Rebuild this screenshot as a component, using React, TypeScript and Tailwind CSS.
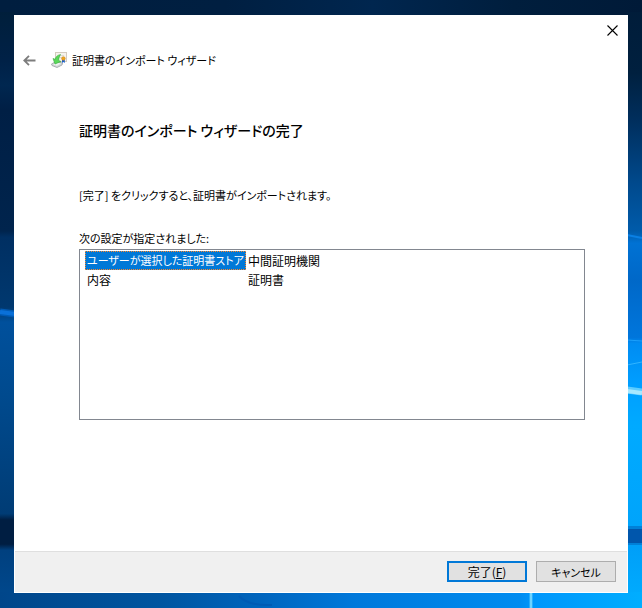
import React from "react";

const settings = [
  { name: "ユーザーが選択した証明書ストア", value: "中間証明機関" },
  { name: "内容", value: "証明書" },
];

function Wallpaper() {
  return (
    <svg
      aria-hidden="true"
      className="absolute inset-0 -z-10 h-full w-full"
      viewBox="0 0 642 608"
      preserveAspectRatio="none"
    >
      <defs>
        <linearGradient id="top" x1="0" x2="1" y1="0" y2="0">
          <stop offset="0" stopColor="#001e3f" />
          <stop offset="0.35" stopColor="#001f41" />
          <stop offset="0.58" stopColor="#00264f" />
          <stop offset="0.8" stopColor="#001e3d" />
          <stop offset="1" stopColor="#001a38" />
        </linearGradient>
        <linearGradient id="left" x1="0" x2="0" y1="0" y2="608" gradientUnits="userSpaceOnUse">
          <stop offset="0" stopColor="#001e38" />
          <stop offset="0.1" stopColor="#002147" />
          <stop offset="0.14" stopColor="#002750" />
          <stop offset="0.18" stopColor="#001f45" />
          <stop offset="0.38" stopColor="#00244d" />
          <stop offset="0.39" stopColor="#002f62" />
          <stop offset="0.505" stopColor="#00386f" />
          <stop offset="0.53" stopColor="#00509c" />
          <stop offset="0.65" stopColor="#004a8e" />
          <stop offset="0.845" stopColor="#003c75" />
          <stop offset="0.855" stopColor="#001e42" />
          <stop offset="0.895" stopColor="#001e42" />
          <stop offset="0.905" stopColor="#00407f" />
          <stop offset="1" stopColor="#004a90" />
        </linearGradient>
        <linearGradient id="right" x1="0" x2="0" y1="0" y2="608" gradientUnits="userSpaceOnUse">
          <stop offset="0" stopColor="#001c39" />
          <stop offset="0.12" stopColor="#00203f" />
          <stop offset="0.2" stopColor="#002f5e" />
          <stop offset="0.3" stopColor="#00498c" />
          <stop offset="0.38" stopColor="#005baa" />
          <stop offset="0.4" stopColor="#0072d4" />
          <stop offset="0.46" stopColor="#0068c8" />
          <stop offset="0.555" stopColor="#0076dc" />
          <stop offset="0.565" stopColor="#008cf2" />
          <stop offset="0.63" stopColor="#009eff" />
          <stop offset="0.7" stopColor="#00aaff" />
          <stop offset="0.865" stopColor="#00a4fb" />
          <stop offset="0.9" stopColor="#009ff8" />
          <stop offset="1" stopColor="#00aeff" />
        </linearGradient>
        <linearGradient id="bottom" x1="0" x2="1" y1="0" y2="0">
          <stop offset="0" stopColor="#00468a" />
          <stop offset="0.25" stopColor="#0055a0" />
          <stop offset="0.4" stopColor="#0064bc" />
          <stop offset="0.55" stopColor="#0078da" />
          <stop offset="0.81" stopColor="#008cf0" />
          <stop offset="0.83" stopColor="#0096fb" />
          <stop offset="1" stopColor="#00aeff" />
        </linearGradient>
      </defs>
      <rect width="642" height="16" fill="url(#top)" />
      <rect y="12" width="15" height="596" fill="url(#left)" />
      <rect x="627" y="12" width="15" height="596" fill="url(#right)" />
      <rect x="0" y="592" width="642" height="16" fill="url(#bottom)" />
      <path d="M0 312 L15 314" stroke="#005ab4" strokeWidth="7" />
      <path d="M0 312 L15 314" stroke="#0a70d8" strokeWidth="4" />
      <path d="M627 235 L642 238" stroke="#0a80e4" strokeWidth="2" />
      <path d="M627 340 L642 341" stroke="#1ba0fb" strokeWidth="1" />
      <path d="M627 365 L642 362" stroke="#30b4ff" strokeWidth="1" />
      <path d="M627 390 L642 392" stroke="#5cccff" strokeWidth="7" />
      <path d="M627 391 L642 393" stroke="#a8e8ff" strokeWidth="4" />
      <rect x="627" y="526" width="15" height="19" fill="#0080d8" />
      <rect x="627" y="529" width="15" height="14" fill="#0056ac" />
      <path d="M531 592 V608" stroke="#4cc4ff" strokeWidth="3" />
      <path d="M531 592 V608" stroke="#8fe2ff" strokeWidth="1" />
      <path d="M239 596 Q248 606 272 605" stroke="#005bb4" strokeWidth="2" fill="none" />
    </svg>
  );
}

function CertificateIcon() {
  return (
    <svg aria-hidden="true" className="h-4 w-4 shrink-0" viewBox="0 0 16 16">
      <rect x="4.5" y="0.5" width="11" height="9" fill="#f6f3ee" stroke="#d3cabf" />
      <path d="M8 3.5h5M8 5.5h3" stroke="#dedad4" />
      <path d="M0.5 12 L5 9.5 L11.5 11 L11 13 L6 15.5 L1 13.5Z" fill="#d3d6d8" stroke="#9aa1a5" strokeWidth="0.8" />
      <path d="M2 12.3 L6 10.8 L10 11.5 L5.8 13.7Z" fill="#f0f2f2" />
      <path d="M11 7.5v3.5l1.4-1 1.4 1V7.5z" fill="#1c62cb" />
      <circle cx="12.4" cy="6.5" r="1.8" fill="#f0a51c" stroke="#c67d10" strokeWidth="0.5" />
      <path d="M9.5 2.5 Q4.8 3.5 4.3 7.3 L2 6.5 L4 12 L10 9.5 L7.6 8.4 Q7.6 5.5 9.5 2.5Z" fill="#5bd85a" stroke="#35ac3d" strokeWidth="0.6" />
    </svg>
  );
}

export default function App() {
  return (
    <div className="relative isolate flex min-h-screen flex-col px-3.5 py-[15px] font-['Noto_Sans_CJK_JP',sans-serif] text-[11px] leading-5 text-black [font-feature-settings:'palt']">
      <Wallpaper />
      <main className="flex flex-1 flex-col bg-white">
        <div className="flex h-[30px] justify-end">
          <button type="button" aria-label="閉じる" className="flex w-8 items-center justify-center">
            <svg className="h-[11px] w-[11px]" viewBox="0 0 11 11" fill="none" stroke="#000">
              <path d="M0.5 0.5 L10.5 10.5 M10.5 0.5 L0.5 10.5" strokeWidth="1.1" />
            </svg>
          </button>
        </div>

        <header className="flex h-[30px] items-center px-[9px]">
          <button type="button" aria-label="戻る" className="mr-[15px] flex h-5 w-[13px] items-center">
            <svg className="h-[11px] w-[13px]" viewBox="0 0 13 11" fill="none" stroke="#7d7d7d" strokeWidth="1.8">
              <path d="M12.5 5.5 H1.5 M6 0.8 L1.3 5.5 L6 10.2" />
            </svg>
          </button>
          <CertificateIcon />
          <p className="ml-[5px]">証明書のインポート ウィザード</p>
        </header>

        <div className="flex-1 pl-[65px] pr-[43px]">
          <h1 className="pt-[43px] text-sm leading-6 font-medium">証明書のインポート ウィザードの完了</h1>
          <p className="pt-[43px]">[完了] をクリックすると、証明書がインポートされます。</p>
          <p id="settings-label" className="pt-[23px] pb-px">次の設定が指定されました:</p>
          <div className="h-[171px] border border-[#828790] pt-px pl-[5px]">
            <table aria-labelledby="settings-label" className="border-collapse text-left">
              <tbody>
                {settings.map((row, index) => (
                  <tr key={row.name} className="h-[19px] leading-[17px]">
                    <th scope="row" className="p-0 font-normal whitespace-nowrap">
                      <span
                        className={
                          index === 0
                            ? "block border border-dotted border-[#ff8728] bg-[#0078d7] px-px text-white"
                            : "block border border-transparent px-px text-xs leading-[17px]"
                        }
                      >
                        {row.name}
                      </span>
                    </th>
                    <td className="p-0 pl-0.5 text-xs leading-[17px] whitespace-nowrap">{row.value}</td>
                  </tr>
                ))}
              </tbody>
            </table>
          </div>
        </div>

        <footer className="mx-px mb-px flex justify-end gap-[9px] border-t border-[#dfdfdf] bg-[#f0f0f0] px-[11px] pt-[9px] pb-2.5">
          <button type="button" className="flex h-[21px] w-20 items-center justify-center border-2 border-[#0078d7] bg-[#e1e1e1] text-xs">
            <span>完了(<u>F</u>)</span>
          </button>
          <button type="button" className="flex h-[21px] w-20 items-center justify-center border border-[#adadad] bg-[#e1e1e1]">
            キャンセル
          </button>
        </footer>
      </main>
    </div>
  );
}
